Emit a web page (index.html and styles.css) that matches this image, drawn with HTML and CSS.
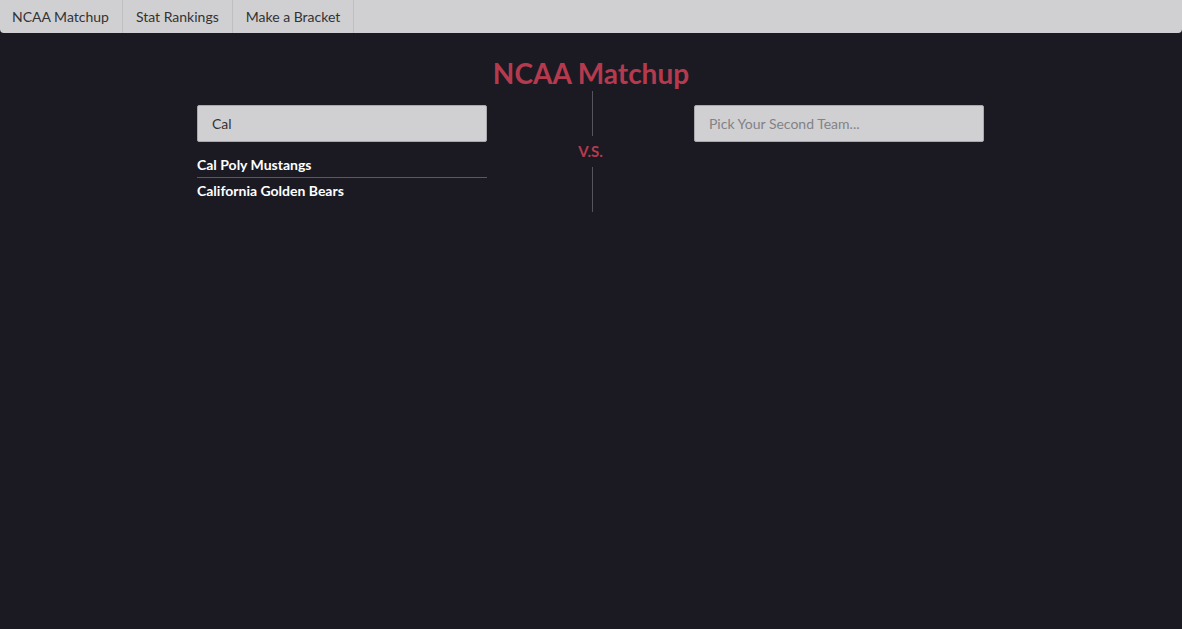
FILE: index.html
```html
<!DOCTYPE html>
<html>
<head>
<meta charset="utf-8">
<link rel="stylesheet" href="styles.css">
</head>
<body>
<nav class="navbar">
  <a class="nav-item nav-first" href="#">NCAA Matchup</a>
  <a class="nav-item" href="#">Stat Rankings</a>
  <a class="nav-item" href="#">Make a Bracket</a>
</nav>
<main class="page">
  <h1 class="title">NCAA Matchup</h1>
  <div class="matchup">
    <div class="team-col">
      <input class="team-input" type="text" value="Cal">
      <ul class="suggestions">
        <li class="suggestion">Cal Poly Mustangs</li>
        <li class="suggestion">California Golden Bears</li>
      </ul>
    </div>
    <div class="vs-col">
      <div class="vs-line vs-line-top"></div>
      <div class="vs-text">V.S.</div>
      <div class="vs-line vs-line-bottom"></div>
    </div>
    <div class="team-col">
      <input class="team-input" type="text" placeholder="Pick Your Second Team...">
    </div>
  </div>
</main>
</body>
</html>
```

FILE: styles.css
```css
html, body {
  margin: 0;
  padding: 0;
  height: 100%;
}
body {
  background: #1b1a23;
  font-family: "Lato", "Open Sans", sans-serif;
  color: #fff;
}
.navbar {
  display: flex;
  height: 33px;
  background: #d0d0d2;
  border-radius: 0 0 4px 4px;
}
.nav-item {
  display: flex;
  align-items: center;
  padding: 0 13px 1px 13px;
  font-size: 14px;
  color: #333;
  text-decoration: none;
  border-right: 1px solid #bfbfc2;
}
.nav-first {
  padding-left: 12px;
}
.page {
  display: flex;
  flex-direction: column;
  align-items: center;
}
.title {
  margin: 23px 0 0 0;
  font-size: 28px;
  line-height: 34px;
  font-weight: 700;
  color: #b63a4e;
}
.matchup {
  display: flex;
  width: 787px;
  margin-top: 1px;
  margin-right: 1px;
}
.team-col {
  width: 290px;
  padding-top: 14px;
}
.team-input {
  box-sizing: border-box;
  width: 290px;
  height: 37px;
  padding: 0 14px;
  border: 1px solid #a9a9ad;
  border-radius: 2px;
  background: #d0d0d2;
  font-family: "Lato", sans-serif;
  font-size: 14px;
  color: #333;
  outline: none;
}
.team-input::placeholder {
  color: #828287;
}
.suggestions {
  list-style: none;
  margin: 10px 0 0 0;
  padding: 0;
}
.suggestion {
  font-size: 14px;
  font-weight: 700;
  line-height: 25px;
  color: #fff;
}
.suggestion + .suggestion {
  border-top: 1px solid #5a5960;
}
.vs-col {
  flex: 1;
  display: flex;
  flex-direction: column;
  align-items: center;
}
.vs-line {
  width: 1px;
  margin-left: 4px;
  background: #55545c;
}
.vs-line-top {
  height: 45px;
}
.vs-line-bottom {
  height: 45px;
}
.vs-text {
  font-size: 15px;
  font-weight: 700;
  line-height: 31px;
  color: #b63a4e;
  margin-left: 0;
}
```
